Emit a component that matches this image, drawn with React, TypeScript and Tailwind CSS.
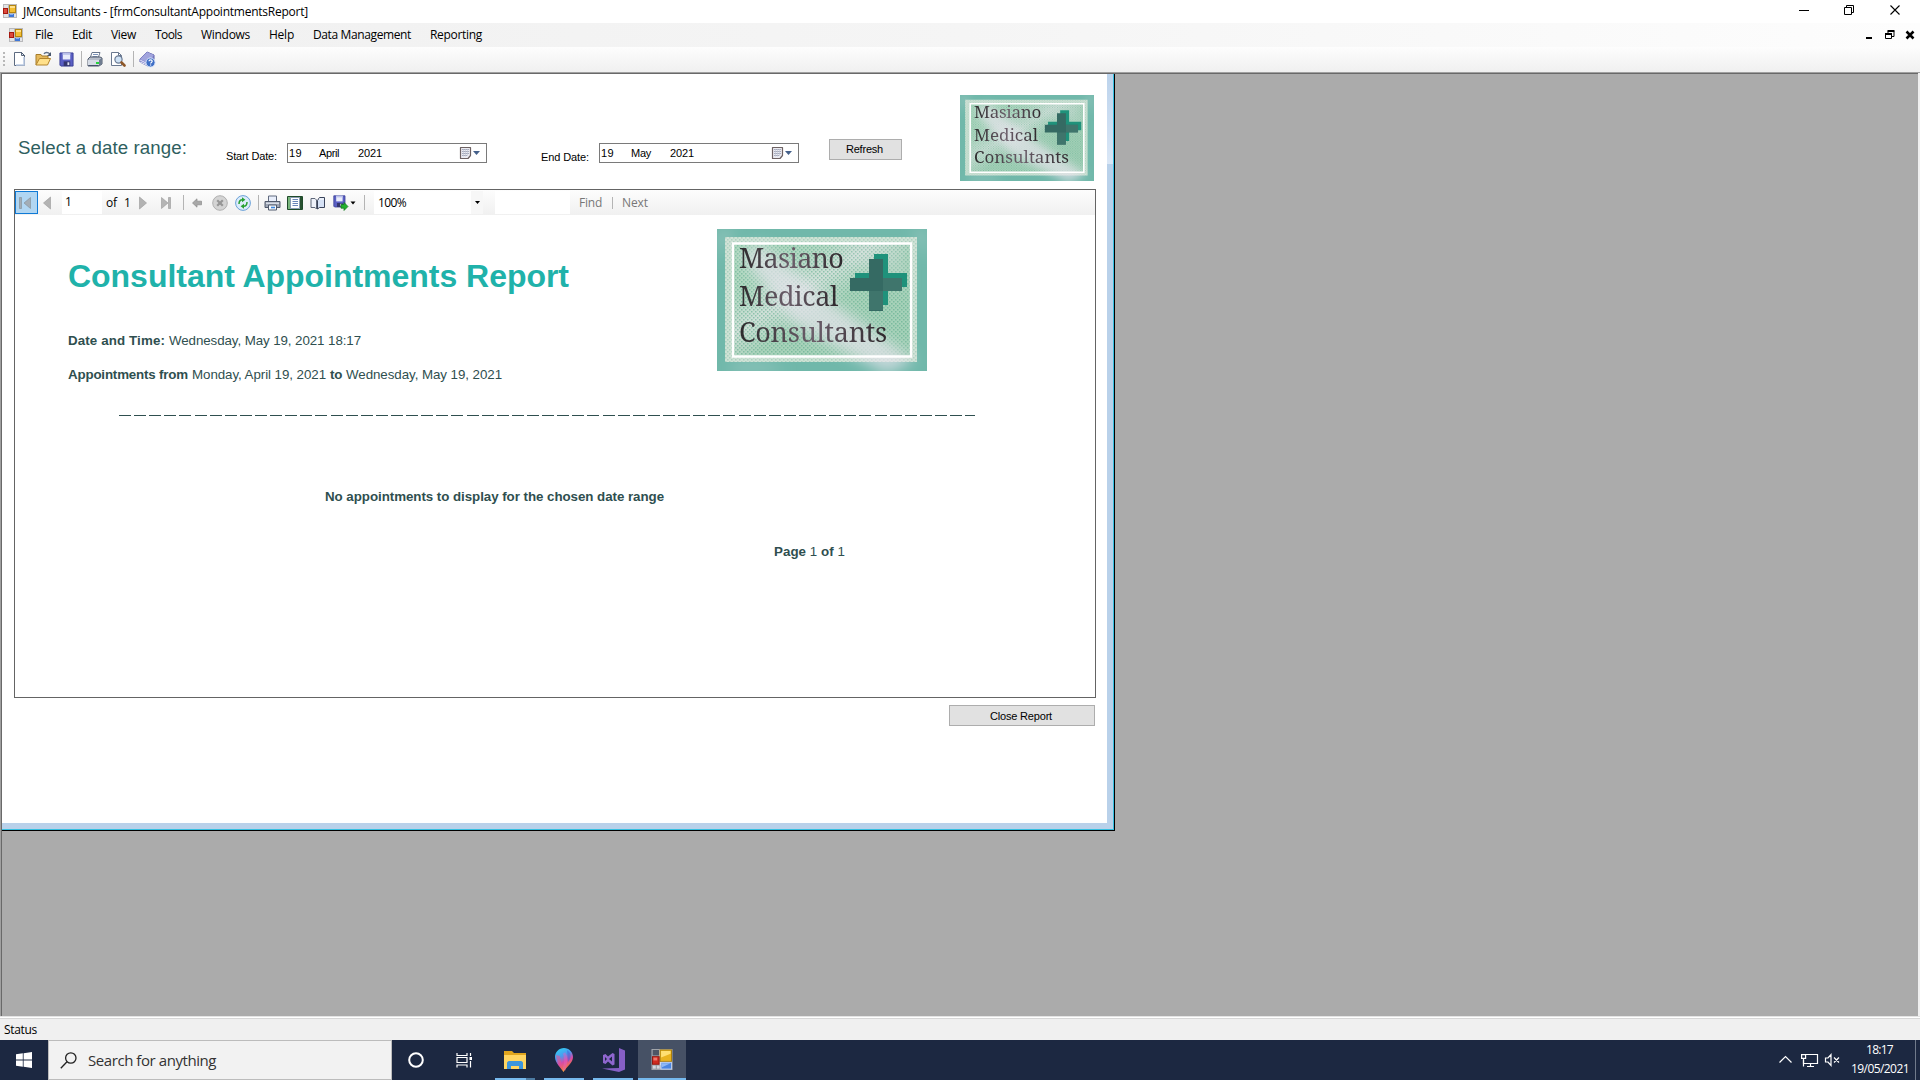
import { useLayoutEffect, useRef, type ReactNode } from "react";

/* Single-line label whose tracking is adjusted so that it fills its box. */
function Fit({ className = "", children }: { className?: string; children: ReactNode }) {
  const box = useRef<HTMLDivElement>(null);
  const text = useRef<HTMLSpanElement>(null);
  useLayoutEffect(() => {
    if (!box.current || !text.current) return;
    const el = text.current;
    el.style.letterSpacing = "0px";
    const n = (el.textContent || "").length;
    const natural = el.getBoundingClientRect().width;
    const wanted = box.current.getBoundingClientRect().width;
    if (n > 1) el.style.letterSpacing = `${(wanted - natural) / n}px`;
  }, []);
  return (
    <div ref={box} className={"shrink-0 whitespace-pre " + className}>
      <span ref={text}>{children}</span>
    </div>
  );
}

const UI = "font-['Open_Sans',sans-serif]";
const ARIAL = "font-['Liberation_Sans',sans-serif]";

function FormIcon({ className = "" }: { className?: string }) {
  return (
    <svg viewBox="0 0 22 22" className={"shrink-0 " + className}>
      <rect x="0.5" y="0.5" width="21" height="21" fill="#e4e7ec" stroke="#a5a8ad" />
      <path d="M1 1h7v6H1z" fill="#4d5666" />
      <path d="M1 17h8v4H1z" fill="#d4d8df" stroke="#8e9299" strokeWidth="0.7" />
      <path d="M5 17v4" stroke="#8e9299" />
      <rect x="9" y="1" width="12" height="12" fill="#e9b320" stroke="#a77b08" />
      <path d="M10 2h10v3L10 9z" fill="#ffdf73" />
      <rect x="1" y="8" width="7" height="8" fill="#cf2b20" stroke="#8e150d" />
      <path d="M2 9h4v3H2z" fill="#f0776d" />
      <rect x="10" y="14" width="11" height="7" fill="#4c86e0" stroke="#b9cdf0" />
      <path d="M11 15h9l-9 4z" fill="#8fb8f5" />
    </svg>
  );
}

/* 14px version of the form icon, aligned to whole pixels. */
function FormIconSmall({ className = "" }: { className?: string }) {
  return (
    <svg viewBox="0 0 14 14" className={"size-[14px] shrink-0 " + className} shapeRendering="crispEdges">
      <path d="M0 0h14v14H0z" fill="#b9b9bb" />
      <path d="M1 1h4v3H1zM1 10h4v3H1z" fill="#e2e3e6" />
      <path d="M6 10h7v3H6z" fill="#e2e3e6" />
      <path d="M0 4h5v6H0z" fill="#a5180f" />
      <path d="M1 5h3v4H1z" fill="#dc4a3c" />
      <path d="M6 1h7v8H6z" fill="#b5860f" />
      <path d="M7 2h5v6H7z" fill="#f3be33" />
      <path d="M7 2h5v2H7z" fill="#ffe08a" />
      <path d="M6 10h5v3H6z" fill="#3f77d8" />
      <path d="M7 10h3v1H7z" fill="#86aef0" />
    </svg>
  );
}

const Sep = ({ className = "" }: { className?: string }) => (
  <div className={"w-px shrink-0 bg-[#b4b4b4] " + className} />
);

function SmallSave() {
  return (
    <>
      <path d="M1 1h14v14H2L1 14z" fill="#5a5fc4" stroke="#3a3f96" />
      <path d="M4 1h8v7H4z" fill="#e9ecfb" />
      <path d="M4 1h8v2H4z" fill="#b9bfe9" />
      <path d="M5 10h7v5H5z" fill="#34366e" />
      <path d="M9 11h2v3H9z" fill="#dfe2f5" />
    </>
  );
}

function TopToolbar() {
  return (
    <div className="flex h-[25px] shrink-0 items-center bg-linear-to-b from-[#fdfdfd] to-[#f0f0f0] pb-[1px]">
      <div className="ml-[3px] flex w-[2px] flex-col gap-[2px]">
        {[0, 1, 2, 3].map((i) => (
          <div key={i} className="size-[2px] bg-[#b8b8b8]" />
        ))}
      </div>
      <svg viewBox="0 0 16 16" className="ml-[6px] size-4">
        <path d="M3.500 1.500h7l3 3v10h-10z" fill="#fff" stroke="#5c6a80" />
        <path d="M5 14h8V6" fill="none" stroke="#bccbe3" strokeWidth="1.600" />
        <path d="M10.500 1.500v3h3z" fill="#dde5f2" stroke="#35445c" strokeWidth="0.800" />
      </svg>
      <svg viewBox="0 0 17 16" className="ml-[8px] h-4 w-[17px]">
        <path d="M1 14V3.500h5l1 1.500h6v3" fill="#e5b95c" stroke="#a67c2a" />
        <path d="M1 14L4.500 7.500h11L12.500 14z" fill="#ffe08a" stroke="#b2842c" />
        <path d="M9 3c1-2 4-2 6 0" fill="none" stroke="#5f7088" strokeWidth="1.300" />
        <path d="M16 1v4h-4z" fill="#49586e" />
      </svg>
      <svg viewBox="0 0 16 16" className="ml-[7px] h-[15px] w-[15px]"><SmallSave /></svg>
      <Sep className="ml-[7px] h-4" />
      <svg viewBox="0 0 16 16" className="ml-[5px] size-4">
        <path d="M5 1.500h8l-2 6H3z" fill="#fff" stroke="#66758c" />
        <path d="M6 3.500h5M5.500 5.500h5" stroke="#7d95bb" />
        <path d="M1 8l2-2h10l2 1v6l-3 2H1z" fill="#b6bdc9" stroke="#505b6d" />
        <path d="M1 9h11v5H1z" fill="#d5dbe5" />
        <path d="M12 9l3-2v6l-3 2z" fill="#6f7c90" />
        <path d="M9 11h3v2H9z" fill="#25d43a" />
        <path d="M1.500 14.500h10" stroke="#44506a" />
      </svg>
      <svg viewBox="0 0 16 16" className="ml-[7px] size-4">
        <path d="M1.500 1.500h7l3 3v10h-10z" fill="#fff" stroke="#6a788f" />
        <path d="M8.500 1.500v3h3" fill="none" stroke="#6a788f" />
        <circle cx="8.500" cy="8.500" r="3.600" fill="#cfe2f5" stroke="#6a7a94" strokeWidth="1.200" />
        <path d="M11.500 11.500l3 3" stroke="#8d5728" strokeWidth="2.600" strokeLinecap="round" />
      </svg>
      <Sep className="ml-[7px] h-4" />
      <svg viewBox="0 0 17 17" className="ml-[5px] size-[17px]">
        <path d="M1 8L8 1l7 3v4l-6 7-8-4z" fill="#8a8ed2" stroke="#5b5fa8" />
        <path d="M1 9l8 4M1 11l7 3" stroke="#e6e8fa" />
        <path d="M8 1L1 8l7 3 7-7z" fill="#a1a4dd" />
        <circle cx="11.500" cy="11.500" r="4.600" fill="#3f6fc6" stroke="#dbe7fb" />
        <path d="M10 10.300c0-2 3.200-2 3.200 0 0 1.200-1.600 1.100-1.600 2.300M11.600 13.600v1" fill="none" stroke="#fff" strokeWidth="1.200" />
      </svg>
    </div>
  );
}

function Logo({ id, className, text }: { id: string; className: string; text: ReactNode }) {
  return (
    <div className={"grid shrink-0 " + className}>
      <svg viewBox="0 0 210 142" preserveAspectRatio="none" className="col-start-1 row-start-1 size-full">
        <defs>
          <pattern id={id + "d"} width="4" height="4" patternUnits="userSpaceOnUse">
            <path d="M0 0h1.500v1.500H0zM2 2h1.500v1.500H2z" fill="#4fa584" />
          </pattern>
          <linearGradient id={id + "g"} x1="0" y1="0" x2="1" y2="1">
            <stop offset="0" stopColor="#a9d6bb" />
            <stop offset="0.250" stopColor="#b4d8c3" />
            <stop offset="0.400" stopColor="#d0e0d8" />
            <stop offset="0.550" stopColor="#a9d2ba" />
            <stop offset="1" stopColor="#a3d0b7" />
          </linearGradient>
          <filter id={id + "b"}><feGaussianBlur stdDeviation="7" /></filter>
          <clipPath id={id + "c"}><path d="M0 0h210v142H0z" /></clipPath>
        </defs>
        <g clipPath={`url(#${id}c)`}>
          <path d="M0 0h210v142H0z" fill="#70b8aa" />
          <path d="M8 8h192v125H8z" fill="#cfe2d5" />
          <path d="M8 8h192v125H8z" fill={`url(#${id}d)`} opacity="0.300" />
          <path d="M16 14.500h178v113H16z" fill={`url(#${id}g)`} />
          <path d="M16 14.500h178v113H16z" fill={`url(#${id}d)`} opacity="0.500" />
          <g filter={`url(#${id}b)`} fill="#e7e4ed">
            <path d="M22 24L44 15 118 76l80 55-28 14L80 98z" opacity="0.700" />
            <path d="M120 20h70v40z" opacity="0.250" />
            <path d="M0 0h18L0 32z" opacity="0.250" />
            <path d="M195 0h15v34z" opacity="0.250" />
            <path d="M18 134h30l24 8H10z" opacity="0.300" />
          </g>
          <path d="M16 14.500h178v113H16z" fill="none" stroke="#fff" strokeWidth="2.400" />
          <path d="M157 25h14v19h19v14h-19v18h-14V58h-19V44h19z" fill="#1f927b" />
          <path d="M152 30h14v19h19v13h-19v20h-14V62h-19V49h19z" fill="#356a63" />
          <path d="M166 49v13h-14v19h14V62h19V49z" fill="#4b8378" opacity="0.450" />
        </g>
      </svg>
      <div className="col-start-1 row-start-1 font-['Noto_Serif','Liberation_Serif',serif] text-[#3a3338]">{text}</div>
    </div>
  );
}

const INK = "bg-linear-to-r from-[#2c2a2c] via-[#6c5f6b] to-[#2e282c] bg-clip-text text-transparent";

function DatePicker({ month, className, monthCls }: { month: string; className: string; monthCls: string }) {
  return (
    <div className={"flex h-[20px] w-[200px] shrink-0 items-center border border-[#7a7a7a] bg-white text-[11px] leading-[18px] text-black " + className}>
      <Fit className="ml-[1px] w-[13px]">19</Fit>
      <Fit className={monthCls}>{month}</Fit>
      <Fit className="ml-[19px] w-[24px]">2021</Fit>
      <div className="flex-1" />
      <svg viewBox="0 0 22 14" className="mr-[5px] h-[14px] w-[22px]">
        <path d="M1.500 1.500h10v8l-2.500 3H1.500z" fill="#ececf2" stroke="#6d6263" strokeWidth="1.200" strokeLinejoin="round" />
        <path d="M3 3.500h7M3 5.500h7M3 7.500h7M3 9.500h5" stroke="#a7abbd" />
        <path d="M4.500 3v7.500M6.500 3v7.500M8.500 3v7" stroke="#c3c7d4" strokeWidth="0.600" />
        <path d="M14 5h7l-3.500 4z" fill="#44608a" />
      </svg>
    </div>
  );
}

function ReportToolbar() {
  return (
    <div className={"flex h-[25px] items-center bg-linear-to-b from-[#fdfdfd] to-[#f0f0f0] text-[12px] leading-[22px] text-black " + UI}>
      <div className="flex h-[23px] w-[23px] shrink-0 items-center justify-center border border-[#0f7ad6] bg-[#b1d6f2]">
        <svg viewBox="0 0 16 16" className="mr-[3px] size-4">
          <path d="M2.500 2.500h2v11h-2zM13.500 2.500v11L7 8z" fill="#a3adb6" stroke="#87939e" strokeWidth="0.700" />
        </svg>
      </div>
      <svg viewBox="0 0 8 14" className="ml-[5px] h-[14px] w-2"><path d="M7.500 1v12L.5 7z" fill="#b3b3b3" stroke="#999" strokeWidth="0.600" /></svg>
      <div className="ml-[11px] h-[23px] w-10 shrink-0 bg-white pl-[3px]">1</div>
      <Fit className="ml-1 w-[11px]">of</Fit>
      <div className="ml-[7px] w-[7px]">1</div>
      <svg viewBox="0 0 8 14" className="ml-[8px] h-[14px] w-2"><path d="M.5 1v12l7-6z" fill="#b3b3b3" stroke="#999" strokeWidth="0.600" /></svg>
      <svg viewBox="0 0 12 14" className="ml-[13px] h-[14px] w-3"><path d="M1.500 1.500v11L8 7zM8.500 1.500h2v11h-2z" fill="#b5b5b5" stroke="#999" strokeWidth="0.600" /></svg>
      <Sep className="ml-[11px] h-[15px]" />
      <svg viewBox="0 0 10 10" className="ml-[8px] size-[10px]"><path d="M.5 5L5 .8v2.400h4.500v3.600H5v2.400z" fill="#a8a8a8" stroke="#8b8b8b" strokeWidth="0.700" /></svg>
      <svg viewBox="0 0 16 16" className="ml-[10px] size-4">
        <circle cx="8" cy="8" r="7.300" fill="#d4d4d4" stroke="#b0b0b0" />
        <path d="M5.200 5.200l5.600 5.600M10.800 5.200l-5.600 5.600" stroke="#969696" strokeWidth="2.200" />
      </svg>
      <svg viewBox="0 0 16 16" className="ml-[7px] size-4">
        <circle cx="8" cy="8" r="7.400" fill="#dcecfb" stroke="#6ba1d8" />
        <path d="M4 9C4 6 5 4.700 7.500 4.700M12 7c0 3-1 4.300-3.500 4.300" fill="none" stroke="#28a032" strokeWidth="1.500" />
        <path d="M7 2.200l3.400 2.500L7 7.200zM9 8.800v5l-3.400-2.500z" fill="#28a032" />
      </svg>
      <Sep className="ml-[7px] h-[15px]" />
      <svg viewBox="0 0 17 16" className="ml-[5px] h-4 w-[17px]">
        <path d="M4.500 1h8v6h-8z" fill="#e8eefb" stroke="#606a7e" />
        <path d="M1 6.500h15v6H1z" fill="#9ea6b5" stroke="#505a6c" />
        <path d="M2 7.500h13v1.500H2z" fill="#d9dee8" />
        <path d="M4.500 10h8v5h-8z" fill="#f8fbff" stroke="#505a6c" />
        <path d="M7 12.500h4" stroke="#3d86dd" strokeWidth="1.600" />
      </svg>
      <svg viewBox="0 0 16 16" className="ml-[6px] size-4">
        <path d="M.5 1.500h15v13H.5z" fill="#79b67c" stroke="#1f4a2a" />
        <path d="M13 2h2v12h-2z" fill="#26502f" />
        <path d="M3.500 2.500h9v11h-9z" fill="#fff" stroke="#8a9bb2" />
        <path d="M5.500 4.500h5.500M5.500 6.500h5.500M5.500 8.500h5.500M5.500 10.500h5.500" stroke="#6a86ba" />
      </svg>
      <svg viewBox="0 0 16 16" className="ml-[7px] size-4">
        <path d="M1 3.500h4l1.500 1.500v9L5 12.500H1z" fill="#eef2fa" stroke="#5d6678" />
        <path d="M7.500 5.500L9.500 2.500h5v10h-5l-2 1.500z" fill="#d5e1f5" stroke="#39435a" />
        <path d="M9 4h5" stroke="#fff" />
      </svg>
      <svg viewBox="0 0 23 16" className="ml-[7px] h-4 w-[23px]">
        <g transform="scale(.8)"><SmallSave /></g>
        <path d="M8 9.500h3V7.500l4 4-4 4v-2.300H8z" fill="#22b02e" stroke="#11741c" strokeWidth="0.700" />
        <path d="M17.500 6.500h5L20 9.500z" fill="#000" />
      </svg>
      <Sep className="ml-[8px] h-[15px]" />
      <div className="ml-[9px] flex h-[23px] w-[109px] shrink-0 items-center bg-white pl-1">
        <Fit className="w-[28px]">100%</Fit>
        <div className="flex-1" />
        <div className="flex h-full w-[12px] items-center justify-center bg-[#f7f7f7]">
          <svg viewBox="0 0 5 3" className="h-[3px] w-[5px]"><path d="M0 0h5L2.500 3z" /></svg>
        </div>
      </div>
      <div className="ml-[12px] h-[23px] w-[75px] shrink-0 bg-white" />
      <Fit className="ml-[9px] w-[23px] text-[#777]">Find</Fit>
      <Sep className="ml-[10px] h-3" />
      <Fit className="ml-[9px] w-[26px] text-[#777]">Next</Fit>
    </div>
  );
}

function Report() {
  return (
    <div className={"flex flex-1 flex-col text-[13.33px] leading-[16px] text-[#2f4f4f] " + ARIAL}>
      <div className="flex h-[200px]">
        <div className="ml-[53px] w-[649px] pt-[43px]">
          <Fit className="w-[501px] text-[32px] leading-[36px] font-bold text-[#20b2aa]">Consultant Appointments Report</Fit>
          <div className="mt-[39px] flex gap-1">
            <Fit className="w-[97px] font-bold">Date and Time:</Fit>
            <Fit className="w-[192px]">Wednesday, May 19, 2021 18:17</Fit>
          </div>
          <div className="mt-[18px] flex gap-1">
            <Fit className="w-[120px] font-bold">Appointments from</Fit>
            <Fit className="w-[134px]">Monday, April 19, 2021</Fit>
            <Fit className="w-[12px] font-bold">to</Fit>
            <Fit className="w-[156px]">Wednesday, May 19, 2021</Fit>
          </div>
        </div>
        <Logo
          id="big"
          className="mt-[14px] h-[142px] w-[210px]"
          text={
            <div className="flex flex-col pt-[10px] pl-[22px] text-[27px] leading-[37px]">
              <Fit className={"w-[104px] " + INK}>Masiano</Fit>
              <Fit className={"mt-[1px] w-[99px] " + INK}>Medical</Fit>
              <Fit className={"-mt-[1px] w-[148px] " + INK}>Consultants</Fit>
            </div>
          }
        />
      </div>
      <svg viewBox="0 0 856 1" className="ml-[104px] h-px w-[856px]" shapeRendering="crispEdges">
        <path d="M0 .5h856" stroke="#2f4f4f" strokeDasharray="12 3.110" />
      </svg>
      <Fit className="mt-[73px] ml-[310px] w-[339px] font-bold">No appointments to display for the chosen date range</Fit>
      <div className="mt-[39px] ml-[759px] flex">
        <Fit className="w-[71px]"><b>Page</b> 1 <b>of</b> 1</Fit>
      </div>
    </div>
  );
}

function ChildForm() {
  return (
    <div className="flex h-[757px] w-[1113px] border-r border-b border-black">
      <div className="flex flex-1 flex-col border-r border-b border-[#35bfe0]">
        <div className="flex flex-1">
          <div className={"flex flex-1 flex-col bg-white " + ARIAL}>
            <div className="flex h-[115px] text-[11px] leading-[14px] text-black">
              <Fit className="mt-[63px] ml-[16px] w-[169px] text-[18.67px] leading-[22px] text-[#2f5f5f]">Select a date range:</Fit>
              <Fit className="mt-[75px] ml-[39px] w-[51px]">Start Date:</Fit>
              <DatePicker month="April" className="mt-[69px] ml-[10px]" monthCls="ml-[17px] w-[20px]" />
              <Fit className="mt-[76px] ml-[54px] w-[48px]">End Date:</Fit>
              <DatePicker month="May" className="mt-[69px] ml-[10px]" monthCls="ml-[17px] w-[20px]" />
              <div className="mt-[65px] ml-[30px] flex h-[21px] w-[73px] shrink-0 border border-[#adadad] bg-[#e1e1e1] pl-[16px] leading-[19px]">
                <Fit className="w-[37px]">Refresh</Fit>
              </div>
              <Logo
                id="small"
                className="mt-[21px] ml-[58px] h-[86px] w-[134px]"
                text={
                  <div className="flex flex-col pt-[5px] pl-[14px] text-[17px] leading-[23px]">
                    <Fit className={"w-[67px] " + INK}>Masiano</Fit>
                    <Fit className={"w-[64px] " + INK}>Medical</Fit>
                    <Fit className={"-mt-px w-[95px] " + INK}>Consultants</Fit>
                  </div>
                }
              />
            </div>
            <div className="ml-[12px] flex h-[509px] w-[1082px] flex-col border border-[#646464]">
              <ReportToolbar />
              <Report />
            </div>
            <div className="mt-[7px] ml-[947px] flex h-[21px] w-[146px] border border-[#adadad] bg-[#e1e1e1] pl-[40px] text-[11px] leading-[20px] text-black">
              <Fit className="w-[62px]">Close Report</Fit>
            </div>
          </div>
          <div className="w-[6px] bg-[#b9d1ea]">
            <div className="h-[90px] bg-linear-to-b from-[#bcd3ec] to-[#dae7f6]" />
          </div>
        </div>
        <div className="h-[6px] bg-[#b9d1ea]" />
      </div>
    </div>
  );
}

function Taskbar() {
  return (
    <div className={"flex h-[40px] shrink-0 bg-[#1c2841] text-white " + UI}>
      <div className="flex w-12 items-center justify-center">
        <svg viewBox="0 0 16 16" className="size-4" fill="#fff">
          <path d="M0 2.300L6.800 1.300v6.300H0zM7.600 1.200L16 0v7.600H7.600zM0 8.400h6.800v6.300L0 13.700zM7.600 8.400H16V16l-8.400-1.200z" />
        </svg>
      </div>
      <div className="flex w-[344px] items-center border border-[#bcbcbc] bg-[#f2f2f2] text-[#333]">
        <svg viewBox="0 0 17 17" className="ml-[11px] size-[17px]" fill="none" stroke="#222" strokeWidth="1.300">
          <circle cx="10.800" cy="6" r="5.200" />
          <path d="M7 9.800L.8 16.300" />
        </svg>
        <Fit className="ml-[11px] w-[128px] text-[15px] leading-[36px]">Search for anything</Fit>
      </div>
      <div className="flex w-12 items-center justify-center">
        <svg viewBox="0 0 16 16" className="size-4"><circle cx="8" cy="8" r="6.800" fill="none" stroke="#fff" strokeWidth="2" /></svg>
      </div>
      <div className="flex w-12 items-center justify-center">
        <svg viewBox="0 0 17 16" className="h-4 w-[17px]" fill="none" stroke="#fff" strokeWidth="1.200">
          <path d="M1 1v2.500h10V1M1 5.500h10v5H1zM1 15.500v-2.500h10v2.500M14.500 1v3M14.500 9v6.500" />
          <path d="M13.500 5h2.500v3h-2.500z" fill="#fff" stroke="none" />
        </svg>
      </div>
      <div className="ml-[7px] flex w-10 flex-col items-center">
        <svg viewBox="0 0 22 20" className="mt-[10px] h-5 w-[22px]">
          <path d="M0 1h8l2 2h12v16H0z" fill="#e0a51d" />
          <path d="M0 5h22v14H0z" fill="#ffd561" />
          <path d="M3 19v-6c0-1 1-2 2-2h12c1 0 2 1 2 2v6h-4v-3H7v3z" fill="#3b95dd" />
        </svg>
        <div className="mt-2 h-[2px] w-10 bg-linear-to-r from-[#76b9ed] from-78% to-[#4d7ba2] to-78%" />
      </div>
      <div className="ml-[9px] flex w-10 flex-col items-center">
        <svg viewBox="0 0 18 24" className="mt-[8px] h-6 w-[18px]">
          <defs>
            <linearGradient id="p3" x1="0.200" y1="0" x2="0.600" y2="1">
              <stop offset="0" stopColor="#2fd0f2" />
              <stop offset="0.350" stopColor="#4a9bf0" />
              <stop offset="0.600" stopColor="#d64ba8" />
              <stop offset="0.850" stopColor="#f2714a" />
              <stop offset="1" stopColor="#fbc43c" />
            </linearGradient>
          </defs>
          <path d="M9 0c5 0 9 4 9 9 0 6-6 9-9.500 15C6 20 0 15 0 9c0-5 4-9 9-9z" fill="url(#p3)" />
          <path d="M9 5c2 3 2 10 0 17" stroke="#e75fc0" strokeWidth="3" fill="none" opacity="0.450" />
          <path d="M12 2c4 2 5 8 1 12z" fill="#3c62d8" opacity="0.500" />
          <path d="M1 7c0 5 3 9 6 13L5 8z" fill="#f0508c" opacity="0.550" />
        </svg>
        <div className="mt-[6px] h-[2px] w-10 bg-[#76b9ed]" />
      </div>
      <div className="ml-[9px] flex w-10 flex-col items-center">
        <svg viewBox="0 0 24 24" className="mt-[8px] size-6">
          <path d="M18 0l6 2.500v19L18 24 1 20.500 18 20z" fill="#865fc5" />
          <path d="M2 7l2.500-1L7 8.500 11.500 5 13.500 6v10.500l-2 1L7 13.500 4.500 16 2 15zM4 9v4l2-2zM11 8.500L8 11l3 2.500z" fill="#8f66cf" fillRule="evenodd" />
        </svg>
        <div className="mt-[6px] h-[2px] w-10 bg-[#76b9ed]" />
      </div>
      <div className="ml-[5px] flex w-12 flex-col items-center bg-[#465165]">
        <FormIcon className="mt-[9px] h-[21px] w-[22px]" />
        <div className="mt-2 h-[2px] w-12 bg-[#76b9ed]" />
      </div>
      <div className="flex-1" />
      <svg viewBox="0 0 62 16" className="mt-[12px] h-4 w-[62px]" fill="none" stroke="#fff" strokeWidth="1.200">
        <path d="M.5 10.500L6.500 4.500l6 6" />
        <path d="M27 2.500h11.500v9H24.500V8M31.500 11.500v3M28 14.500h7" />
        <path d="M22.600 2.600h4v3.800h-4zM24.500 6.400v8" />
        <path d="M46.500 6h2.500l3-3.500v11l-3-3.500h-2.500zM55 5.500l5 5M60 5.500l-5 5" />
      </svg>
      <div className="ml-[10px] flex w-[58px] flex-col items-center text-[12px] leading-[19px]">
        <Fit className="mr-px w-[27px]">18:17</Fit>
        <Fit className="w-[58px]">19/05/2021</Fit>
      </div>
      <div className="mr-1 ml-[6px] w-px bg-[#707a8b]" />
    </div>
  );
}

const MENU: [string, string][] = [
  ["File", "w-[18px]"],
  ["Edit", "w-[20px]"],
  ["View", "w-[25px]"],
  ["Tools", "w-[27px]"],
  ["Windows", "w-[49px]"],
  ["Help", "w-[25px]"],
  ["Data Management", "w-[98px]"],
  ["Reporting", "w-[52px]"],
];

export default function App() {
  return (
    <div className={"flex h-[1080px] w-[1920px] flex-col overflow-hidden bg-[#f0f0f0] text-[12px] text-black " + UI}>
      <div className="flex h-[23px] shrink-0 bg-white leading-[23px]">
        <FormIconSmall className="mt-[4px] ml-[3px]" />
        <Fit className="ml-[6px] w-[285px]">JMConsultants - [frmConsultantAppointmentsReport]</Fit>
        <div className="flex-1" />
        <svg viewBox="0 0 110 23" className="h-[23px] w-[110px]" fill="none" stroke="#000">
          <path d="M9 10.500h10M54.500 7.500h7v7h-7zM56.500 7.500v-2h7v7h-2" />
          <path d="M100.500 5.500l9 9M109.500 5.500l-9 9" strokeWidth="1.100" />
        </svg>
        <div className="w-[20px]" />
      </div>
      <div className="flex h-[24px] shrink-0 bg-linear-to-r from-[#f0f0f0] via-[#f5f5f5] to-[#fdfdfd] leading-[23px]">
        <FormIconSmall className="mt-[5px] ml-[9px]" />
        <div className="ml-[12px] flex gap-[19px]">
          {MENU.map(([label, w]) => (
            <Fit key={label} className={w}>{label}</Fit>
          ))}
        </div>
        <div className="flex-1" />
        <svg viewBox="0 0 50 24" className="mr-[4px] h-6 w-[50px]" fill="none" stroke="#000">
          <path d="M0 15h6" strokeWidth="2" />
          <path d="M19.500 11.500h6v4h-6zM22 10.500v-2h6v5h-2" />
          <path d="M19 11h7M21.500 8h7" strokeWidth="2" />
          <path d="M40.500 8.500l7 7M47.500 8.500l-7 7" strokeWidth="2.500" />
        </svg>
      </div>
      <TopToolbar />
      <div className="flex flex-1 border-t border-l border-[#a0a0a0]">
        <div className="mr-[2px] flex-1 border-t border-l border-[#696969] bg-[#ababab]">
          <ChildForm />
        </div>
      </div>
      <div className="h-px bg-[#e3e3e3]" />
      <div className="h-px bg-white" />
      <div className="h-px bg-[#d7d7d7]" />
      <div className="h-[21px] shrink-0 pl-1 leading-[22px]">
        <Fit className="w-[33px]">Status</Fit>
      </div>
      <Taskbar />
    </div>
  );
}
